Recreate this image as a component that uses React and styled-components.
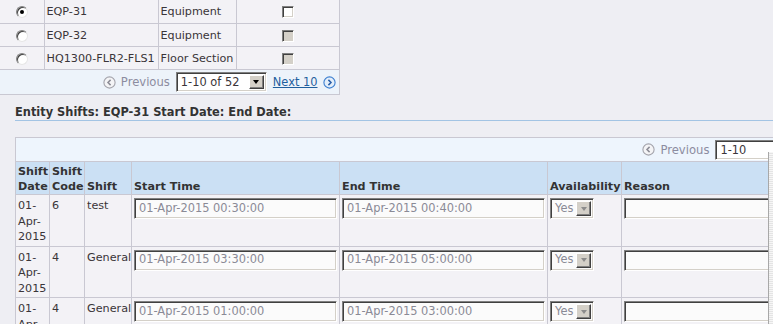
import React from "react";
import styled, { createGlobalStyle } from "styled-components";

const Global = createGlobalStyle`
  html, body { margin: 0; padding: 0; }
  body {
    background: #eeeef3;
    font-family: "DejaVu Sans", Verdana, sans-serif;
    font-size: 11px;
    color: #3a3539;
    overflow: hidden;
    width: 773px;
    height: 324px;
  }
`;

const Page = styled.div`
  position: relative;
  width: 773px;
  height: 324px;
  overflow: hidden;
`;

/* ---------- generic widgets ---------- */
const inset = `
  border: 1px solid;
  border-color: #808080 #ffffff #ffffff #808080;
  box-shadow: inset 1px 1px #404040, inset -1px -1px #d4d0c8;
  box-sizing: border-box;
`;

const Radio = styled.span`
  display: inline-block;
  position: relative;
  width: 12px;
  height: 12px;
  border-radius: 50%;
  box-sizing: border-box;
  border: 1px solid;
  border-color: #808080 #e6e6e6 #e6e6e6 #808080;
  box-shadow: inset 1px 1px #404040;
  background: #fff;
  vertical-align: middle;
  &::after {
    content: "";
    display: ${(p) => (p.$checked ? "block" : "none")};
    position: absolute;
    left: 3px;
    top: 3px;
    width: 4px;
    height: 4px;
    border-radius: 50%;
    background: #000;
  }
`;

const Checkbox = styled.span`
  display: inline-block;
  width: 12px;
  height: 12px;
  ${inset}
  background: ${(p) => (p.$disabled ? "#d4d0c8" : "#fff")};
  vertical-align: middle;
`;

const SelectBox = styled.span`
  display: inline-flex;
  align-items: stretch;
  ${inset}
  width: ${(p) => p.$w}px;
  height: ${(p) => p.$h || 20}px;
  padding: 2px;
  background: ${(p) => (p.$disabled ? "#fbfbfb" : "#fff")};
`;

const SelectText = styled.span`
  flex: 1;
  display: flex;
  align-items: center;
  padding-left: 2px;
  color: ${(p) => (p.$disabled ? "#8a8a96" : "#3a3539")};
  font-size: 11.4px;
  white-space: nowrap;
  overflow: hidden;
`;

const DropButton = styled.span`
  width: 15px;
  flex: none;
  background: #d4d0c8;
  box-sizing: border-box;
  border: 1px solid;
  border-color: #ffffff #404040 #404040 #ffffff;
  box-shadow: inset -1px -1px #808080;
  display: flex;
  align-items: center;
  justify-content: center;
  &::after {
    content: "";
    width: 0;
    height: 0;
    border-left: 3.5px solid transparent;
    border-right: 3.5px solid transparent;
    border-top: 4px solid ${(p) => (p.$disabled ? "#8c8c8c" : "#000")};
  }
`;

const TextField = styled.span`
  display: flex;
  align-items: center;
  ${inset}
  height: 21px;
  width: 100%;
  padding: 0 4px;
  background: #fbfbfb;
  color: #8a8a96;
  font-size: 11.4px;
  white-space: nowrap;
`;

const Select = ({ w, h, disabled, children }) => (
  <SelectBox $w={w} $h={h} $disabled={disabled}>
    <SelectText $disabled={disabled}>{children}</SelectText>
    <DropButton $disabled={disabled} />
  </SelectBox>
);

/* ---------- pager ---------- */
const Pager = styled.div`
  display: flex;
  justify-content: flex-end;
  align-items: center;
  gap: 5px;
  padding-right: ${(p) => p.$pr}px;
`;

const PrevLabel = styled.span`
  color: #8c8ca0;
  font-size: 11.6px;
  margin-right: 1px;
`;

const NextLink = styled.a`
  color: #1f5f9e;
  text-decoration: underline;
  font-size: 11.4px;
  margin-left: 1px;
`;

const NavIcon = ({ dir, active }) => (
  <svg width="13" height="13" viewBox="0 0 13 13">
    <circle
      cx="6.5"
      cy="6.5"
      r="5.6"
      fill={active ? "#e3eefa" : "#f4f4f6"}
      stroke={active ? "#3d7fd0" : "#a4a4ac"}
      strokeWidth="1.1"
    />
    <path
      d={dir === "left" ? "M7.6 3.9 L5 6.5 L7.6 9.1" : "M5.4 3.9 L8 6.5 L5.4 9.1"}
      fill="none"
      stroke={active ? "#2a5fa8" : "#8c8c96"}
      strokeWidth="1.5"
    />
  </svg>
);

/* ---------- entity table ---------- */
const EntityTable = styled.table`
  border-collapse: collapse;
  table-layout: fixed;
  width: 339px;
`;

const ECell = styled.td`
  border: 1px solid #c9c8d2;
  border-top: ${(p) => (p.$first ? "none" : "1px solid #c9c8d2")};
  border-left: ${(p) => (p.$lead ? "none" : "1px solid #c9c8d2")};
  background: #f3f2f6;
  height: ${(p) => (p.$first ? 23 : 22)}px;
  padding: 0 2px;
  white-space: nowrap;
  overflow: hidden;
  text-align: ${(p) => (p.$center ? "center" : "left")};
  vertical-align: middle;
  font-size: 11.2px;
`;

const NavCell = styled.td`
  border: 1px solid #c9c8d2;
  border-left: none;
  background: #edf3fa;
  height: 24px;
  padding: 0;
`;

/* ---------- heading ---------- */
const Heading = styled.h2`
  margin: 10px 0 16px 15px;
  font-size: 11.4px;
  font-weight: bold;
  line-height: 15px;
  color: #333;
  border-bottom: 1px solid #a3c4e4;
`;

/* ---------- shifts table ---------- */
const ShiftTable = styled.table`
  border-collapse: collapse;
  table-layout: fixed;
  width: 863px;
  margin-left: 15px;
`;

const TopBar = styled.td`
  border: 1px solid #c9c8d2;
  background: #eef5fd;
  height: 23px;
  padding: 0;
`;

const Th = styled.th`
  border: 1px solid #c9c8d2;
  background: #cbe0f4;
  padding: 2px 2px 0;
  line-height: 15px;
  font-size: 11.2px;
  font-weight: bold;
  color: #333;
  text-align: left;
  vertical-align: bottom;
  white-space: nowrap;
`;

const Td = styled.td`
  border: 1px solid #c9c8d2;
  background: #f3f2f6;
  padding: 3px 2px 1px;
  line-height: 15.5px;
  font-size: 11.2px;
  vertical-align: top;
  overflow: hidden;
`;

const ScrollEdge = styled.div`
  position: absolute;
  left: 768px;
  top: 152px;
  bottom: 0;
  width: 5px;
  border-left: 1px solid #a8a8a8;
  background: repeating-linear-gradient(
    0deg,
    #e4e4e4 0,
    #e4e4e4 1px,
    #f6f6f6 1px,
    #f6f6f6 2px
  );
`;

const entities = [
  { id: "EQP-31", type: "Equipment", checked: true },
  { id: "EQP-32", type: "Equipment" },
  { id: "HQ1300-FLR2-FLS1", type: "Floor Section" },
];

const shifts = [
  { code: "6", name: "test", start: "01-Apr-2015 00:30:00", end: "01-Apr-2015 00:40:00" },
  { code: "4", name: "General", start: "01-Apr-2015 03:30:00", end: "01-Apr-2015 05:00:00" },
  { code: "4", name: "General", start: "01-Apr-2015 01:00:00", end: "01-Apr-2015 03:00:00" },
];

const colW = [34, 35, 47, 208, 208, 74, 257];

export default function App() {
  return (
    <Page>
      <Global />
      <EntityTable>
        <colgroup>
          <col style={{ width: 44 }} />
          <col style={{ width: 114 }} />
          <col style={{ width: 78 }} />
          <col style={{ width: 103 }} />
        </colgroup>
        <tbody>
          {entities.map((e, i) => (
            <tr key={e.id}>
              <ECell $first={i === 0} $lead $center>
                <Radio $checked={e.checked} />
              </ECell>
              <ECell $first={i === 0}>{e.id}</ECell>
              <ECell $first={i === 0}>{e.type}</ECell>
              <ECell $first={i === 0} $center>
                <Checkbox $disabled={!e.checked} />
              </ECell>
            </tr>
          ))}
          <tr>
            <NavCell colSpan={4}>
              <Pager $pr={3}>
                <NavIcon dir="left" />
                <PrevLabel>Previous</PrevLabel>
                <Select w={91}>1-10 of 52</Select>
                <NextLink href="#">Next 10</NextLink>
                <NavIcon dir="right" active />
              </Pager>
            </NavCell>
          </tr>
        </tbody>
      </EntityTable>

      <Heading>Entity Shifts: EQP-31 Start Date: End Date:</Heading>

      <ShiftTable>
        <colgroup>
          {colW.map((w, i) => (
            <col key={i} style={{ width: w }} />
          ))}
        </colgroup>
        <thead>
          <tr>
            <TopBar colSpan={7}>
              <Pager $pr={3}>
                <NavIcon dir="left" />
                <PrevLabel>Previous</PrevLabel>
                <Select w={91}>1-10</Select>
                <NextLink href="#">Next 10</NextLink>
                <NavIcon dir="right" active />
              </Pager>
            </TopBar>
          </tr>
          <tr>
            <Th>
              Shift
              <br />
              Date
            </Th>
            <Th>
              Shift
              <br />
              Code
            </Th>
            <Th>Shift</Th>
            <Th>Start Time</Th>
            <Th>End Time</Th>
            <Th>Availability</Th>
            <Th>Reason</Th>
          </tr>
        </thead>
        <tbody>
          {shifts.map((s, i) => (
            <tr key={i}>
              <Td>
                01-
                <br />
                Apr-
                <br />
                2015
              </Td>
              <Td>{s.code}</Td>
              <Td>{s.name}</Td>
              <Td>
                <TextField>{s.start}</TextField>
              </Td>
              <Td>
                <TextField>{s.end}</TextField>
              </Td>
              <Td>
                <Select w={44} h={21} disabled>
                  Yes
                </Select>
              </Td>
              <Td>
                <Select w={200} h={21} disabled />
              </Td>
            </tr>
          ))}
        </tbody>
      </ShiftTable>
      <ScrollEdge />
    </Page>
  );
}
